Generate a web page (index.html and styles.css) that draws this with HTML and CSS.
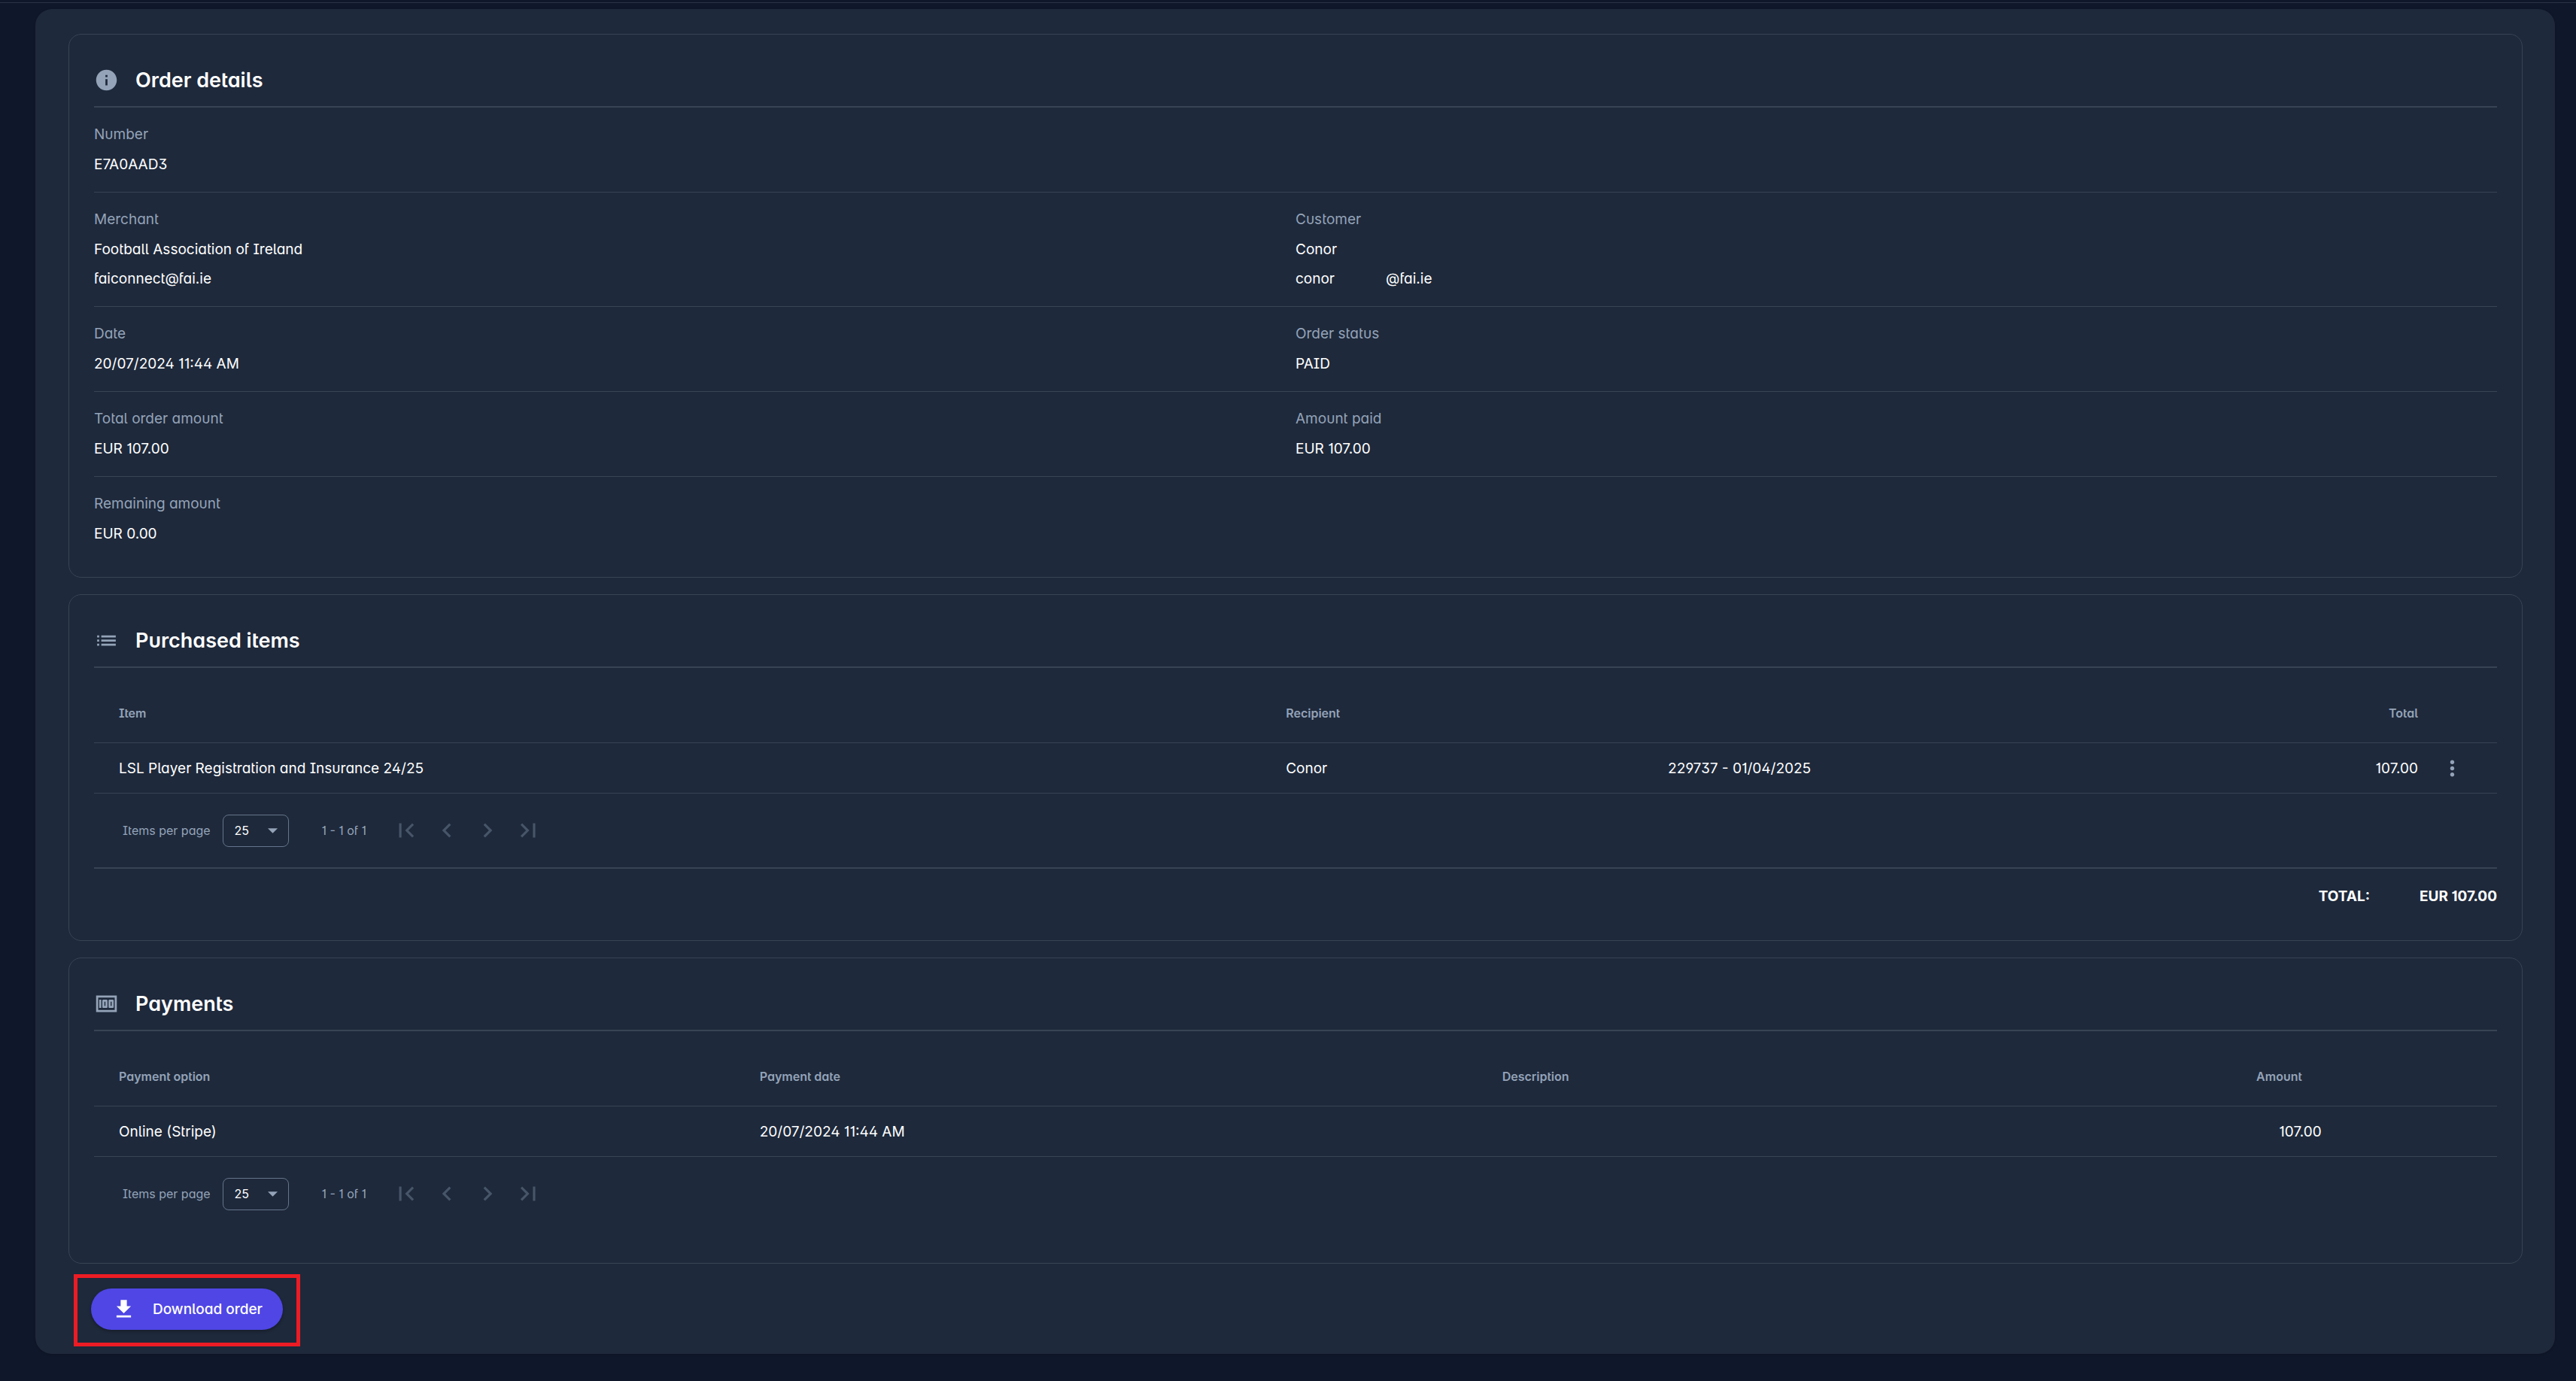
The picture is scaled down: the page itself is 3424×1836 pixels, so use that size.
FILE: index.html
```html
<!DOCTYPE html>
<html lang="en">
<head>
  <meta charset="UTF-8">
  <title>Order details</title>
  <link rel="stylesheet" href="styles.css">
</head>
<body>

  <main class="panel">

    <section class="card">
      <h2 class="card-title">
        <svg class="icon" viewBox="0 0 24 24"><path d="M12 2C6.48 2 2 6.48 2 12s4.48 10 10 10 10-4.48 10-10S17.52 2 12 2zm1 15h-2v-6h2v6zm0-8h-2V7h2v2z"/></svg>
        Order details
      </h2>

      <dl class="details">
        <div class="row">
          <div class="field"><dt>Number</dt><dd>E7A0AAD3</dd></div>
        </div>
        <div class="row">
          <div class="field"><dt>Merchant</dt><dd>Football Association of Ireland</dd><dd>faiconnect@fai.ie</dd></div>
          <div class="field"><dt>Customer</dt><dd>Conor</dd><dd class="email"><span>conor</span><span>@fai.ie</span></dd></div>
        </div>
        <div class="row">
          <div class="field"><dt>Date</dt><dd>20/07/2024 11:44 AM</dd></div>
          <div class="field"><dt>Order status</dt><dd>PAID</dd></div>
        </div>
        <div class="row">
          <div class="field"><dt>Total order amount</dt><dd>EUR 107.00</dd></div>
          <div class="field"><dt>Amount paid</dt><dd>EUR 107.00</dd></div>
        </div>
        <div class="row">
          <div class="field"><dt>Remaining amount</dt><dd>EUR 0.00</dd></div>
        </div>
      </dl>
    </section>

    <section class="card">
      <h2 class="card-title">
        <svg class="icon" viewBox="0 0 24 24"><path d="M3 13h2v-2H3v2zm0 4h2v-2H3v2zm0-8h2V7H3v2zm4 4h14v-2H7v2zm0 4h14v-2H7v2zM7 7v2h14V7H7z"/></svg>
        Purchased items
      </h2>

      <table class="items">
        <colgroup>
          <col class="col-item">
          <col class="col-name">
          <col class="col-id">
          <col class="col-total">
          <col class="col-menu">
        </colgroup>
        <thead>
          <tr><th>Item</th><th colspan="2">Recipient</th><th class="right">Total</th><th></th></tr>
        </thead>
        <tbody>
          <tr>
            <td>LSL Player Registration and Insurance 24/25</td>
            <td>Conor</td>
            <td>229737 - 01/04/2025</td>
            <td class="right">107.00</td>
            <td>
              <button class="menu-btn" type="button" aria-label="More actions">
                <svg class="icon" viewBox="0 0 24 24"><path d="M12 8c1.1 0 2-.9 2-2s-.9-2-2-2-2 .9-2 2 .9 2 2 2zm0 2c-1.1 0-2 .9-2 2s.9 2 2 2 2-.9 2-2-.9-2-2-2zm0 6c-1.1 0-2 .9-2 2s.9 2 2 2 2-.9 2-2-.9-2-2-2z"/></svg>
              </button>
            </td>
          </tr>
        </tbody>
      </table>

      <div class="pager">
        <label for="itemsPageSize">Items per page</label>
        <div class="page-size">
          <select id="itemsPageSize"><option>25</option></select>
          <svg class="arrow" viewBox="0 0 12 6"><path d="M0 0h12L6 6z"/></svg>
        </div>
        <span class="range">1 - 1 of 1</span>
        <button type="button" disabled aria-label="First page"><svg viewBox="0 0 24 24"><path d="M18.41 16.59L13.82 12l4.59-4.59L17 6l-6 6 6 6zM6 6h2v12H6z"/></svg></button>
        <button type="button" disabled aria-label="Previous page"><svg viewBox="0 0 24 24"><path d="M15.41 7.41L14 6l-6 6 6 6 1.41-1.41L10.83 12z"/></svg></button>
        <button type="button" disabled aria-label="Next page"><svg viewBox="0 0 24 24"><path d="M10 6L8.59 7.41 13.17 12l-4.58 4.59L10 18l6-6z"/></svg></button>
        <button type="button" disabled aria-label="Last page"><svg viewBox="0 0 24 24"><path d="M5.59 7.41L10.18 12l-4.59 4.59L7 18l6-6-6-6zM16 6h2v12h-2z"/></svg></button>
      </div>

      <div class="total">
        <span>TOTAL:</span>
        <span>EUR 107.00</span>
      </div>
    </section>

    <section class="card">
      <h2 class="card-title">
        <svg class="icon" viewBox="0 0 24 24"><path d="M5 8h2v8H5zm7 0H9c-.55 0-1 .45-1 1v6c0 .55.45 1 1 1h3c.55 0 1-.45 1-1V9c0-.55-.45-1-1-1zm-1 6h-1v-4h1v4zm7-6h-3c-.55 0-1 .45-1 1v6c0 .55.45 1 1 1h3c.55 0 1-.45 1-1V9c0-.55-.45-1-1-1zm-1 6h-1v-4h1v4zM2 4v16h20V4H2zm2 14V6h16v12H4z"/></svg>
        Payments
      </h2>

      <table class="payments">
        <colgroup>
          <col class="col-option">
          <col class="col-date">
          <col class="col-desc">
          <col class="col-amount">
          <col>
        </colgroup>
        <thead>
          <tr><th>Payment option</th><th>Payment date</th><th>Description</th><th class="right sortable">Amount</th><th></th></tr>
        </thead>
        <tbody>
          <tr><td>Online (Stripe)</td><td>20/07/2024 11:44 AM</td><td></td><td class="right">107.00</td><td></td></tr>
        </tbody>
      </table>

      <div class="pager">
        <label for="paymentsPageSize">Items per page</label>
        <div class="page-size">
          <select id="paymentsPageSize"><option>25</option></select>
          <svg class="arrow" viewBox="0 0 12 6"><path d="M0 0h12L6 6z"/></svg>
        </div>
        <span class="range">1 - 1 of 1</span>
        <button type="button" disabled aria-label="First page"><svg viewBox="0 0 24 24"><path d="M18.41 16.59L13.82 12l4.59-4.59L17 6l-6 6 6 6zM6 6h2v12H6z"/></svg></button>
        <button type="button" disabled aria-label="Previous page"><svg viewBox="0 0 24 24"><path d="M15.41 7.41L14 6l-6 6 6 6 1.41-1.41L10.83 12z"/></svg></button>
        <button type="button" disabled aria-label="Next page"><svg viewBox="0 0 24 24"><path d="M10 6L8.59 7.41 13.17 12l-4.58 4.59L10 18l6-6z"/></svg></button>
        <button type="button" disabled aria-label="Last page"><svg viewBox="0 0 24 24"><path d="M5.59 7.41L10.18 12l-4.59 4.59L7 18l6-6-6-6zM16 6h2v12h-2z"/></svg></button>
      </div>
    </section>

    <div class="highlight">
      <button class="download-btn" type="button">
        <svg viewBox="0 0 24 24"><path d="M19 9h-4V3H9v6H5l7 7 7-7zM5 18v2h14v-2H5z"/></svg>
        Download order
      </button>
    </div>

  </main>

</body>
</html>
```
FILE: styles.css
```css
* {
  box-sizing: border-box;
}
body {
  margin: 0;
  padding-top: 3px;
  background: #0f172a;
  color: #ffffff;
  font-family: Inter, "Liberation Sans", sans-serif;
  font-feature-settings: "salt", "cv11";
  font-size: 19px;
  line-height: 39px;
}
body::before {
  content: "";
  display: block;
  height: 1px;
  background: #2a3346;
}
button, select {
  font: inherit;
  font-feature-settings: inherit;
  color: inherit;
}
svg {
  display: block;
  fill: currentColor;
}
.panel {
  margin: 8px 28px 36px 47px;
  padding: 33px 43px 10px 44px;
  background: #1e293b;
  border-radius: 22px;
  box-shadow: 0 1px 3px rgba(0, 0, 0, 0.2);
}
.card {
  margin-bottom: 22px;
  padding: 20px 33px 38px;
  border: 1px solid #384354;
  border-radius: 17px;
}
.card-title {
  display: flex;
  align-items: center;
  gap: 22px;
  height: 77px;
  margin: 0;
  padding-top: 6px;
  border-bottom: 2px solid #384354;
  font-size: 27px;
  font-weight: 600;
}
.icon {
  width: 33px;
  height: 33px;
  color: #94a3b8;
}

/* Order details */
.details {
  margin: 0;
}
.row {
  display: grid;
  grid-template-columns: 1fr 1fr;
  padding: 16px 0 17px;
  border-bottom: 1px solid #384354;
}
.row:last-child {
  padding-bottom: 0;
  border-bottom: none;
}
dt {
  color: #94a3b8;
  line-height: 40px;
}
dd {
  margin: 0;
}
.email {
  display: flex;
  gap: 68px;
}

/* Tables */
table {
  width: 100%;
  table-layout: fixed;
  border-collapse: separate;
  border-spacing: 0;
}
th, td {
  padding: 0;
  border-bottom: 1px solid #384354;
  text-align: left;
}
th {
  height: 100px;
  padding-top: 22px;
  color: #94a3b8;
  font-size: 16px;
  font-weight: 600;
}
td {
  height: 67px;
}
th:first-child, td:first-child {
  padding-left: 33px;
}
.right {
  text-align: right;
}
.sortable {
  padding-right: 26px;
}
.col-item { width: 49.6%; }
.col-name { width: 15.9%; }
.col-menu { width: 105px; }
.col-option { width: 27.7%; }
.col-date { width: 30.9%; }
.col-desc { width: 22%; }
.col-amount { width: 12.1%; }
.menu-btn {
  display: block;
  margin-left: 29px;
  padding: 0;
  border: none;
  background: none;
  cursor: pointer;
}

/* Paginator */
.pager {
  display: flex;
  align-items: center;
  height: 98px;
  padding-left: 38px;
  color: #94a3b8;
  font-size: 16px;
}
.page-size {
  position: relative;
  margin: 0 44px 0 16px;
}
.page-size select {
  display: block;
  width: 88px;
  height: 43px;
  padding: 0 15px;
  border: 1px solid #64748b;
  border-radius: 8px;
  background: none;
  color: #ffffff;
  appearance: none;
}
.arrow {
  position: absolute;
  top: 18px;
  right: 15px;
  width: 13px;
  height: 7px;
  pointer-events: none;
}
.range {
  margin-right: 26px;
}
.pager button {
  width: 54px;
  height: 54px;
  padding: 8px;
  border: none;
  background: none;
  color: #475569;
}
.pager button svg {
  width: 38px;
  height: 38px;
}

.total {
  display: flex;
  justify-content: flex-end;
  gap: 66px;
  padding-top: 17px;
  border-top: 2px solid #384354;
  font-weight: 700;
  line-height: 40px;
}
.payments + .pager {
  margin-bottom: 5px;
}

/* Download */
.highlight {
  width: fit-content;
  margin: -8px 0 0 7px;
  padding: 14px 18px 17px;
  border: 5px solid #ed1c24;
}
.download-btn {
  display: flex;
  align-items: center;
  gap: 22px;
  height: 55px;
  padding: 0 27px;
  border: none;
  border-radius: 28px;
  background: #4f46e5;
  font-weight: 500;
  box-shadow: 0 2px 4px rgba(0, 0, 0, 0.3);
  cursor: pointer;
}
.download-btn svg {
  width: 33px;
  height: 33px;
}
```
